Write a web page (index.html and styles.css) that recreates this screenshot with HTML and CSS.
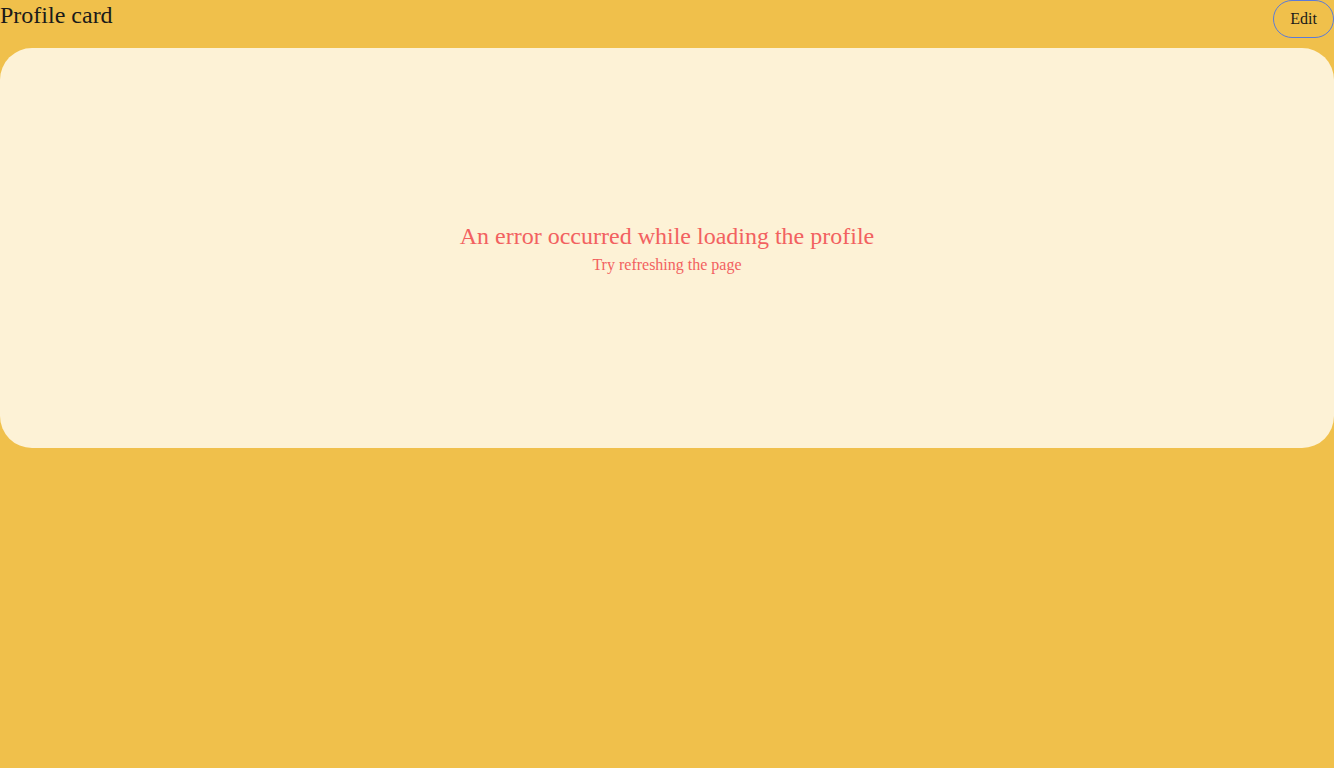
FILE: index.html
```html
<!DOCTYPE html>
<html>
<head>
<meta charset="utf-8">
<link rel="stylesheet" href="styles.css">
</head>
<body>
<div class="page">
  <header class="header">
    <h1 class="title">Profile card</h1>
    <button class="edit">Edit</button>
  </header>
  <section class="card">
    <div class="error">
      <div class="error-title">An error occurred while loading the profile</div>
      <div class="error-sub">Try refreshing the page</div>
    </div>
  </section>
</div>
</body>
</html>
```
FILE: styles.css
```css
html, body {
  margin: 0;
  padding: 0;
  background: #f0c04b;
  font-family: "Liberation Serif", "Times New Roman", serif;
}
.page {
  display: flex;
  flex-direction: column;
  gap: 10px;
}
.header {
  display: flex;
  justify-content: space-between;
  align-items: flex-start;
  height: 38px;
}
.title {
  margin: 0;
  font-size: 24px;
  font-weight: normal;
  line-height: 30px;
  color: #1a1a1a;
}
.edit {
  height: 38px;
  padding: 0 16px;
  border: 1px solid #5b7bd9;
  border-radius: 19px;
  background: transparent;
  font-family: "Liberation Serif", "Times New Roman", serif;
  font-size: 16px;
  color: #1a1a1a;
}
.card {
  height: 400px;
  background: #fdf2d6;
  border-radius: 32px;
  display: flex;
  align-items: center;
  justify-content: center;
}
.error {
  display: flex;
  flex-direction: column;
  align-items: center;
  color: #f26160;
}
.error-title {
  font-size: 24px;
  line-height: 30px;
}
.error-sub {
  margin-top: 3px;
  font-size: 16px;
  line-height: 22px;
}
```
